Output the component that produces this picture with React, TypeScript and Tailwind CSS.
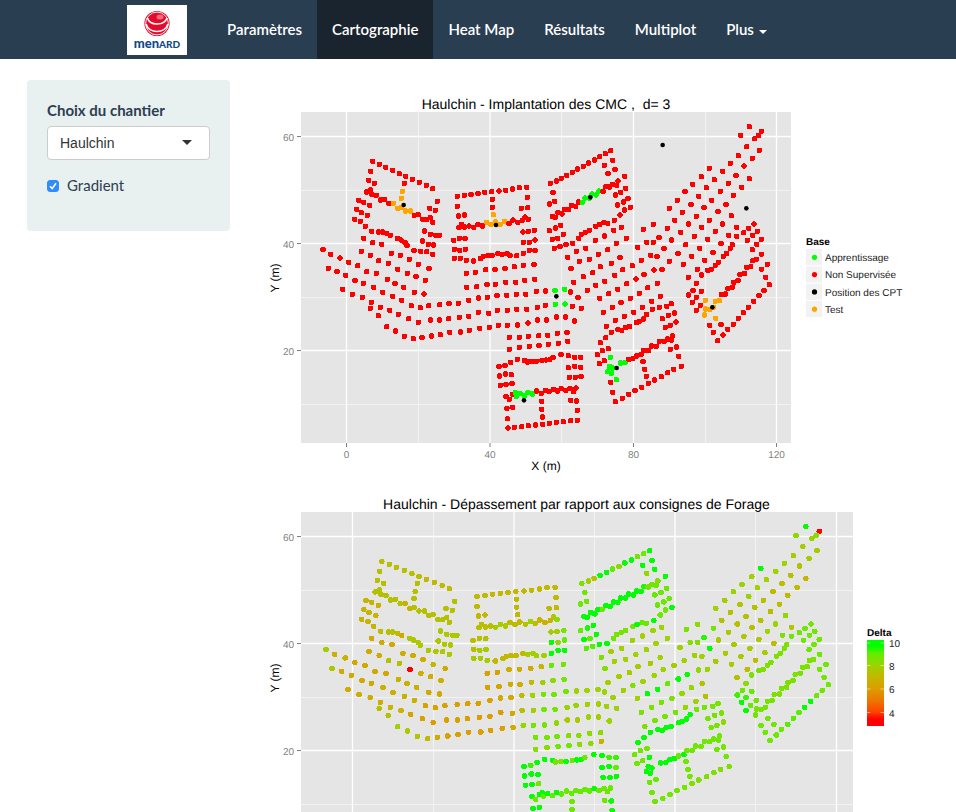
import { useState } from "react";

type Base = "A" | "N" | "P" | "T";
interface Pile {
  x: number;
  y: number;
  base: Base;
  delta: number;
}

const BASE_COLORS: Record<Base, string> = { A: "#00ff00", N: "#ff0000", P: "#000000", T: "#ffa500" };

// Survey blocks: origin plus "x y" pairs in thirds of a unit.
// "@n" sets the delta and "#c" the base class of the piles that follow.
const BLOCKS: { origin: [number, number]; data: string }[] = [
  {
    origin: [300, 110],
    data: `#N @7.3 218 154 238 163 257 172 278 181 298 191 317 199 @7.1 337 208 358 217 379 226 398 236
      @7.4 212 184 206 211 223 220 200 246 211 240 216 254 229 256 241 270 254 268 267 281 313 220
      #T 307 244 304 265 @6.8 280 280 293 295 @7.4 304 292 317 303 331 303
      #N 343 316 355 314 368 328 380 329 391 323 398 337 389 295 406 301 412 274
      @6.9 176 271 191 277 209 286 170 298 184 308 202 316 164 328 181 334 196 349
      @7.3 215 364 236 366 247 366 260 370 @6.4 271 376 @7.6 292 385 303 390 315 397 321 406
      342 421 362 424 380 425 398 433 374 363 391 373 407 376 418 376 368 393 385 403 401 405
      @6.5 191 385 218 398 245 403 184 424 211 436 @7.4 236 452 265 460 @6.6 274 430 301 436 328 448
      @7 355 463 @6.4 387 476 @3 293 478 @6.7 322 490 348 500 376 511
      @7.7 69 418 @6.8 92 433 120 444 @6.4 146 457 173 467 200 485 229 490 @6.8 262 508 285 521 311 532 @6.5 343 547 372 552
      @7.5 85 475 @6.5 111 484 137 496 165 511 190 520 @6.8 221 532 248 547 278 559 305 571 @6.2 334 587 361 593 386 587 419 584
      @6.6 128 538 157 553 187 562 214 577 @6.9 241 592 269 601 @6.3 295 613 @6.1 326 626 355 637 391 630 419 630
      @7.4 211 595 235 617 @8 260 650 @7.6 287 663 313 679 @7.1 340 686 @6.6 366 682 @6.2 394 678 421 674
      #P 311 285`,
  },
  {
    origin: [440, 140],
    data: `#N @7.1 52 169 73 166 93 163 114 160 134 157 155 155 177 153 197 151 218 147 238 143 260 142
      52 199 55 228 73 225 157 178 157 202 262 172 244 205 263 203
      #T 160 224 140 247 153 253 166 246 @7.5 181 253 @8 194 244
      #N @7.3 57 262 64 253 74 261 87 258 @7.7 101 262 114 253 127 258 @7.2 207 250 @6.8 219 240 233 247 247 241 @7.5 255 231 @8.3 265 238
      @7.3 41 301 58 295 75 296 43 328 @7.7 59 331 76 328 43 355 61 355 79 361 @7.1 100 363 121 356 130 349 143 347 156 347 174 341
      @7.9 187 343 201 341 210 347 230 347 @7.8 249 276 265 274 @8.8 283 271 @10 250 307 @8.2 268 307 @9 285 300 @10 250 340 268 331 285 331
      @6.2 79 400 106 397 @6.6 137 389 165 388 @6.5 195 385 @7 223 380 @8.9 250 376 @8.7 282 373
      @6.3 80 442 110 440 @6.6 141 433 166 433 @7.2 197 427 @7.9 227 427 @8.3 254 421 @8.7 284 418
      @6.1 27 491 55 490 86 481 @6.5 115 474 142 472 @7.2 171 467 @8 200 466 @8.8 229 463 257 463 289 454 @8 317 453
      @6 26 536 58 532 86 529 115 517 @6.4 146 520 @7.3 172 511 @7.9 202 511 @8.8 230 508 260 508 @8.1 292 502 316 496
      @6.1 29 577 62 576 88 571 119 565 @6.6 148 562 @8.2 175 556 @8.7 202 556 232 555 @8.2 264 549 @7.7 292 540 319 540 @8 349 531 @7.8 376 531
      @8.8 208 592 238 592 265 589 @8.4 296 587 323 586 352 580 381 578
      208 628 238 622 @8.8 268 619 297 617 @8.3 325 613 355 610 @6.7 383 604
      #A @8 345 451 374 448 346 493 375 492 #P 349 469 168 255`,
  },
  {
    origin: [540, 130],
    data: `#N @8.6 31 160 @8 49 153 @7.5 64 145 @10 80 136 97 127 @9 113 117 @8.3 130 109 @10 146 99 163 90 @8.8 179 80 196 71 @10 212 62
      @8.8 39 187 28 222 44 214 @10 193 106 218 91 @8.3 204 130 @10 225 118 254 139 @8.5 234 153
      @10 37 259 46 262 54 247 66 252 74 238 @9 86 238 @10 95 226 107 229 115 216
      #A 127 217 135 204 148 204 156 192 168 195 177 183 #N 189 184 @9.6 197 170 @8.8 208 171 218 163 230 166
      @8.9 257 175 242 187 226 195 264 205 250 216 233 225 @10 271 232 @8.8 254 240 240 255 @9.8 223 271
      @9 28 302 @9.6 46 294 @10 62 286 37 328 @9 53 325 @10 70 313 @9.1 43 355 60 349 @10 78 343 98 340
      @8.7 116 325 124 313 136 307 148 301 167 289 @10 178 284 @8.9 192 278 203 280
      @8 193 318 221 301 244 292 166 331 229 340 259 325 @7.9 109 364 137 355 @8.5 83 382
      @8 118 394 148 388 175 373 203 359 240 382 @8.5 93 415 @7.8 130 440 158 428 181 410 214 400 277 407
      @7.9 101 457 142 481 @8.5 167 466 @8 194 454 224 436 248 419 92 486 114 502 97 529 124 535 104 573
      179 505 @9.8 206 491 233 478 @8.9 260 461 @10 288 447 @9.8 312 434
      @8.6 190 547 217 532 243 517 271 505 @8.2 298 490 323 473 @8.7 226 571 253 559 281 547 @8.2 307 532
      @8.8 310 298 @8.4 320 337 @7.9 293 352 304 391 #P 151 202`,
  },
  {
    origin: [650, 110],
    data: `#N @10 298 50 @3 334 64 @8.4 272 76 326 76 @8.1 314 86 @7.8 290 110 328 121 265 137 307 145 @8 241 160 @7.4 282 168
      @10 178 175 @8 218 184 154 200 193 209 @7.3 258 196 @6.9 298 206 @8 128 223 169 233 @7.2 235 220 275 232
      @8.1 105 245 146 259 @7.1 211 244 250 256 @7.8 82 271 @7.5 123 284 @7.3 185 271 228 283 @8 58 295 @7.4 97 307 162 292
      @7.1 204 305 @8.2 244 317 @7.4 74 331 139 319 178 331 @8 218 342 @8.7 52 355 @7.3 115 342 155 352 @8 196 364
      @8.4 10 343 @7.6 92 367 133 379 173 388 @9.5 27 382 @7.7 65 390 107 404 149 415 189 428 @8.5 10 397 @10 42 415 @7.7 84 430 125 439
      @7.2 164 451 @8 2 436 21 439 @7.8 58 454 100 463 @7.2 142 478 @8.2 12 480 36 478 @7.4 115 502 22 520 31 559 @8 5 574
      @8.5 236 376 @7.6 260 352 @8.8 281 368 296 355 312 342 322 364 308 376 260 379 292 391 334 388 320 403 307 419 335 433 352 463
      335 478 347 502 358 524 342 541 327 557 @9.9 311 574 295 592 @9.1 280 608 265 625 250 643 @8.8 233 658 219 675 203 692 190 667 179 646 213 643
      @7.3 213 400 @8.6 247 404 241 415 230 430 220 439 205 457 196 466 184 478 173 481 154 495
      319 448 308 452 302 470 290 472 284 490 270 493 264 511 251 517 247 532 234 535 227 552 214 554
      @8.4 139 520 @8.9 129 541 154 544 @9.3 115 555 139 562 @10 127 577 @8.8 151 586 @9.8 139 601
      #T @8.7 166 571 196 574 208 572 166 597 179 598 190 592 164 615 197 625
      #P 187 592 38 105 289 295`,
  },
  {
    origin: [480, 290],
    data: `#N @8.6 379 109 @10 394 127 377 143 361 158 @8.8 385 176 367 182 352 194
      @10 414 119 425 121 436 113 449 109 469 98 478 94 490 87 500 73 @8.7 517 58 538 52 560 49 574 41
      547 86 565 76 583 69 556 112 571 106 @8.2 588 96 @8.8 358 221 373 212
      #A @9.8 391 202 388 229 383 245 394 250 398 234 @9 409 269 @9.8 422 219 435 217
      #N 446 208 458 206 @8.8 469 198 @9.9 483 194 @8.8 491 181 505 182 515 168 529 169 538 154 552 155 563 147 575 150 578 138
      571 178 589 171 596 199 @8.5 604 229 581 238 563 248 544 260 523 270 505 280 @8.8 485 292 465 302 446 313 427 325 406 335
      392 277 398 307 489 215 494 238 499 259
      @10 57 229 @9.3 75 226 @10 92 217 112 208 133 211 @8.6 142 216 155 214 @10 169 214 @8.7 186 211 @9.8 198 210 209 209 @8.9 219 202 @10 243 193 265 197 @9.3 284 202 302 202
      @10 59 258 76 252 94 254 61 286 78 283 @8.8 96 281 @10 265 233 284 229 @9 302 232 @10 268 262 286 262 303 259
      78 319 @8.8 88 328 @10 98 313 #A 106 308 @9 109 319 @10 120 311 @9 133 317 @10 144 307 @9 157 312
      #N @9 170 303 184 310 196 301 207 305 220 298 232 303 @9.8 244 296 @8.9 257 301 270 295 288 294 280 305
      @10 81 355 98 352 83 386 @8.9 185 334 185 358 187 381 272 331 @9.7 289 333 292 361
      84 414 103 412 125 410 145 407 167 405 188 403 208 400 229 397 250 395 272 392 292 391
      #P 132 331 410 234`,
  },
];

function readPiles(): Pile[] {
  const piles: Pile[] = [];
  for (const { origin, data } of BLOCKS) {
    let base: Base = "N";
    let delta = 8;
    let x: number | null = null;
    for (const token of data.split(/\s+/)) {
      if (token[0] === "#") base = token[1] as Base;
      else if (token[0] === "@") delta = Number(token.slice(1));
      else if (x === null) x = origin[0] + Number(token) / 3;
      else {
        piles.push({ x, y: origin[1] + Number(token) / 3, base, delta });
        x = null;
      }
    }
  }
  return piles;
}

const PILES = readPiles();

const STOPS: [number, number, number, number][] = [
  [3.4, 255, 0, 0],
  [4, 255, 64, 0],
  [5, 236, 120, 0],
  [6, 219, 157, 0],
  [7, 197, 182, 0],
  [8, 158, 210, 0],
  [9, 100, 236, 0],
  [9.8, 0, 255, 0],
];

function deltaColor(d: number): string {
  if (d <= STOPS[0][0]) return "#ff0000";
  for (let i = 1; i < STOPS.length; i++) {
    const a = STOPS[i - 1];
    const b = STOPS[i];
    if (d <= b[0]) {
      const t = (d - a[0]) / (b[0] - a[0]);
      const c = [1, 2, 3].map((k) => Math.round(a[k] + (b[k] - a[k]) * t));
      return `rgb(${c[0]},${c[1]},${c[2]})`;
    }
  }
  return "#00ff00";
}

const FONT = "font-['Liberation_Sans',Arial,sans-serif]";

interface PanelProps {
  right: number;
  major: number[];
  minor: number[];
  xAxis?: boolean;
}

function Panel({ right, major, minor, xAxis = false }: PanelProps) {
  return (
    <g>
      <rect x="301" y="112" width={right - 301} height="331" fill="#e5e5e5" />
      {minor.map((x) => (
        <line key={x} x1={x} x2={x} y1="112" y2="443" stroke="#f2f2f2" />
      ))}
      {[190.5, 297.5, 404.5].map((y) => (
        <line key={y} x1="301" x2={right} y1={y} y2={y} stroke="#f2f2f2" />
      ))}
      {major.map((x, i) => (
        <g key={x}>
          <line x1={x} x2={x} y1="112" y2="443" stroke="#fff" strokeWidth="1.3" />
          {xAxis && (
            <>
              <line x1={x} x2={x} y1="443" y2="447" stroke="#7f7f7f" />
              <text x={x} y="458" textAnchor="middle" fontSize="10" fill="#7f7f7f">
                {i * 40}
              </text>
            </>
          )}
        </g>
      ))}
      {[136.5, 243.5, 350.5].map((y, i) => (
        <g key={y}>
          <line x1="301" x2={right} y1={y} y2={y} stroke="#fff" strokeWidth="1.3" />
          <line x1="297" x2="301" y1={y} y2={y} stroke="#7f7f7f" />
          <text x="294" y={y + 4.5} textAnchor="end" fontSize="10" fill="#7f7f7f">
            {60 - i * 20}
          </text>
        </g>
      ))}
      {xAxis && (
        <text x={(301 + right) / 2} y="470" textAnchor="middle" fontSize="12">
          X (m)
        </text>
      )}
      <text transform="translate(279 278) rotate(-90)" textAnchor="middle" fontSize="12">
        Y (m)
      </text>
    </g>
  );
}

const LEGEND: [Base, string][] = [
  ["A", "Apprentissage"],
  ["N", "Non Supervisée"],
  ["P", "Position des CPT"],
  ["T", "Test"],
];

function ImplantationPlot() {
  return (
    <svg
      viewBox="260 80 680 400"
      className={`block w-full max-w-[680px] ${FONT}`}
      textRendering="geometricPrecision"
      role="img"
      aria-label="Implantation des CMC"
    >
      <text x="546" y="109" textAnchor="middle" fontSize="14" className="whitespace-pre">
        {"Haulchin - Implantation des CMC ,  d= 3"}
      </text>
      <Panel right={791} major={[346.5, 490, 633.5, 776.5]} minor={[418.5, 561.5, 705.5]} xAxis />
      <g shapeRendering="crispEdges">
        {PILES.filter((p) => p.base !== "P").map((p, i) => (
          <circle key={i} cx={p.x} cy={p.y} r="2.8" fill={BASE_COLORS[p.base]} />
        ))}
      </g>
      {PILES.filter((p) => p.base === "P").map((p, i) => (
        <circle key={i} cx={p.x} cy={p.y} r="2.3" />
      ))}
      <text x="806" y="245" fontSize="10" fontWeight="bold">
        Base
      </text>
      {LEGEND.map(([base, label], i) => (
        <g key={base}>
          <rect x="806" y={249 + i * 17.3} width="16" height="16.3" fill="#f2f2f2" />
          <circle cx="814.5" cy={257.3 + i * 17.3} r="2.6" fill={BASE_COLORS[base]} />
          <text x="825" y={261 + i * 17.3} fontSize="10" fill="#222">
            {label}
          </text>
        </g>
      ))}
    </svg>
  );
}

function DepassementPlot({ gradient }: { gradient: boolean }) {
  return (
    <svg
      viewBox="260 80 680 365"
      className={`block w-full max-w-[680px] ${FONT}`}
      textRendering="geometricPrecision"
      role="img"
      aria-label="Dépassement"
    >
      <defs>
        <linearGradient id="delta" x1="0" y1="1" x2="0" y2="0">
          <stop offset="0.08" stopColor="#ff0000" />
          <stop offset="0.16" stopColor="#ff4000" />
          <stop offset="0.3" stopColor="#ec7800" />
          <stop offset="0.43" stopColor="#db9d00" />
          <stop offset="0.57" stopColor="#c5b600" />
          <stop offset="0.7" stopColor="#9ed200" />
          <stop offset="0.84" stopColor="#64ec00" />
          <stop offset="0.93" stopColor="#00ff00" />
        </linearGradient>
      </defs>
      <text x="576.5" y="109" textAnchor="middle" fontSize="14">
        Haulchin - Dépassement par rapport aux consignes de Forage
      </text>
      <Panel right={853} major={[352.5, 514, 675, 836.5]} minor={[433.5, 594.5, 755.5]} />
      <g shapeRendering="crispEdges">
        {PILES.filter((p) => p.base !== "P").map((p, i) => (
          <circle
            key={i}
            cx={352.5 + (p.x - 346.6) * 1.1255}
            cy={p.y}
            r="2.8"
            fill={gradient ? deltaColor(p.delta) : BASE_COLORS[p.base]}
          />
        ))}
      </g>
      <text x="867" y="236" fontSize="10" fontWeight="bold">
        Delta
      </text>
      <rect x="867" y="240" width="17" height="86" fill="url(#delta)" />
      {[243, 265.5, 289, 312.5].map((y, i) => (
        <g key={y}>
          <path d={`M867 ${y}h3.5M880.500 ${y}h3.5`} stroke="#fff" strokeWidth="0.5" />
          <text x="889" y={y + 4} fontSize="10" fill="#222">
            {10 - i * 2}
          </text>
        </g>
      ))}
    </svg>
  );
}

function Logo() {
  return (
    <svg viewBox="0 0 60 50" className="h-[50px] w-[60px]" role="img" aria-label="Menard">
      <rect width="60" height="50" fill="#fff" />
      <circle cx="30" cy="18.500" r="12.600" fill="#e30b2c" />
      <circle cx="30" cy="18.500" r="11.400" fill="none" stroke="#fff" strokeWidth="0.9" />
      <path d="M20.500 13c2 8 17 8 19.500 0" fill="none" stroke="#fff" strokeWidth="1.500" />
      <path d="M19 19c3 10 19 10 22 0" fill="none" stroke="#fff" strokeWidth="1.700" />
      <ellipse cx="33" cy="12" rx="3.500" ry="2.500" fill="#fff" opacity="0.4" />
      <text x="30" y="43" textAnchor="middle" fontSize="13" fontWeight="900" fill="#114a8b" fontFamily="Lato, sans-serif">
        men<tspan fontSize="10">ARD</tspan>
      </text>
    </svg>
  );
}

const TABS = ["Paramètres", "Cartographie", "Heat Map", "Résultats", "Multiplot"];

export default function App() {
  const [gradient, setGradient] = useState(true);
  return (
    <div className="min-h-screen bg-white font-['Lato',sans-serif] text-[15px] leading-[21px] text-[#2c3e50]">
      <nav className="flex h-[59px] items-stretch bg-[#2a3e52] pl-[127px] font-semibold text-white">
        <a href="#accueil" className="mr-[25px] flex items-center">
          <Logo />
        </a>
        {TABS.map((tab) => (
          <a
            key={tab}
            href={`#${tab}`}
            className={`flex items-center px-[15px] ${tab === "Cartographie" ? "bg-[#1a242f]" : ""}`}
          >
            {tab}
          </a>
        ))}
        <button type="button" className="flex items-center gap-[5px] px-[15px]">
          Plus
          <span className="mt-1 border-x-4 border-t-4 border-x-transparent border-t-white" />
        </button>
      </nav>
      <div className="flex items-start gap-[30px] pt-[21px] pl-[27px]">
        <form className="w-[203px] shrink-0 rounded bg-[#e9f0f0] px-5 pt-5 pb-[35px]">
          <label htmlFor="chantier" className="mb-[5px] block font-bold">
            Choix du chantier
          </label>
          <div className="relative">
            <select
              id="chantier"
              className={`block h-[34px] w-full appearance-none rounded border border-[#cccccc] bg-white px-3 text-[14px] text-[#333333] ${FONT}`}
            >
              <option>Haulchin</option>
            </select>
            <span className="pointer-events-none absolute top-[14px] right-[18px] border-x-[5px] border-t-[5px] border-x-transparent border-t-[#333333]" />
          </div>
          <label className="mt-[15px] flex items-center gap-2">
            <span className="relative flex">
              <input
                type="checkbox"
                checked={gradient}
                onChange={(e) => setGradient(e.target.checked)}
                className="h-3 w-3 appearance-none rounded-[3px] border border-[#aaaaaa] bg-white checked:border-[#2f8cff] checked:bg-[#2f8cff]"
              />
              <svg viewBox="0 0 12 12" className="pointer-events-none absolute inset-0 h-3 w-3">
                <path d="M3 6.300L5.200 8.600L9 3.300" fill="none" stroke="#fff" strokeWidth="1.600" />
              </svg>
            </span>
            Gradient
          </label>
        </form>
        <main className="min-w-0 flex-1">
          <ImplantationPlot />
          <DepassementPlot gradient={gradient} />
        </main>
      </div>
    </div>
  );
}
